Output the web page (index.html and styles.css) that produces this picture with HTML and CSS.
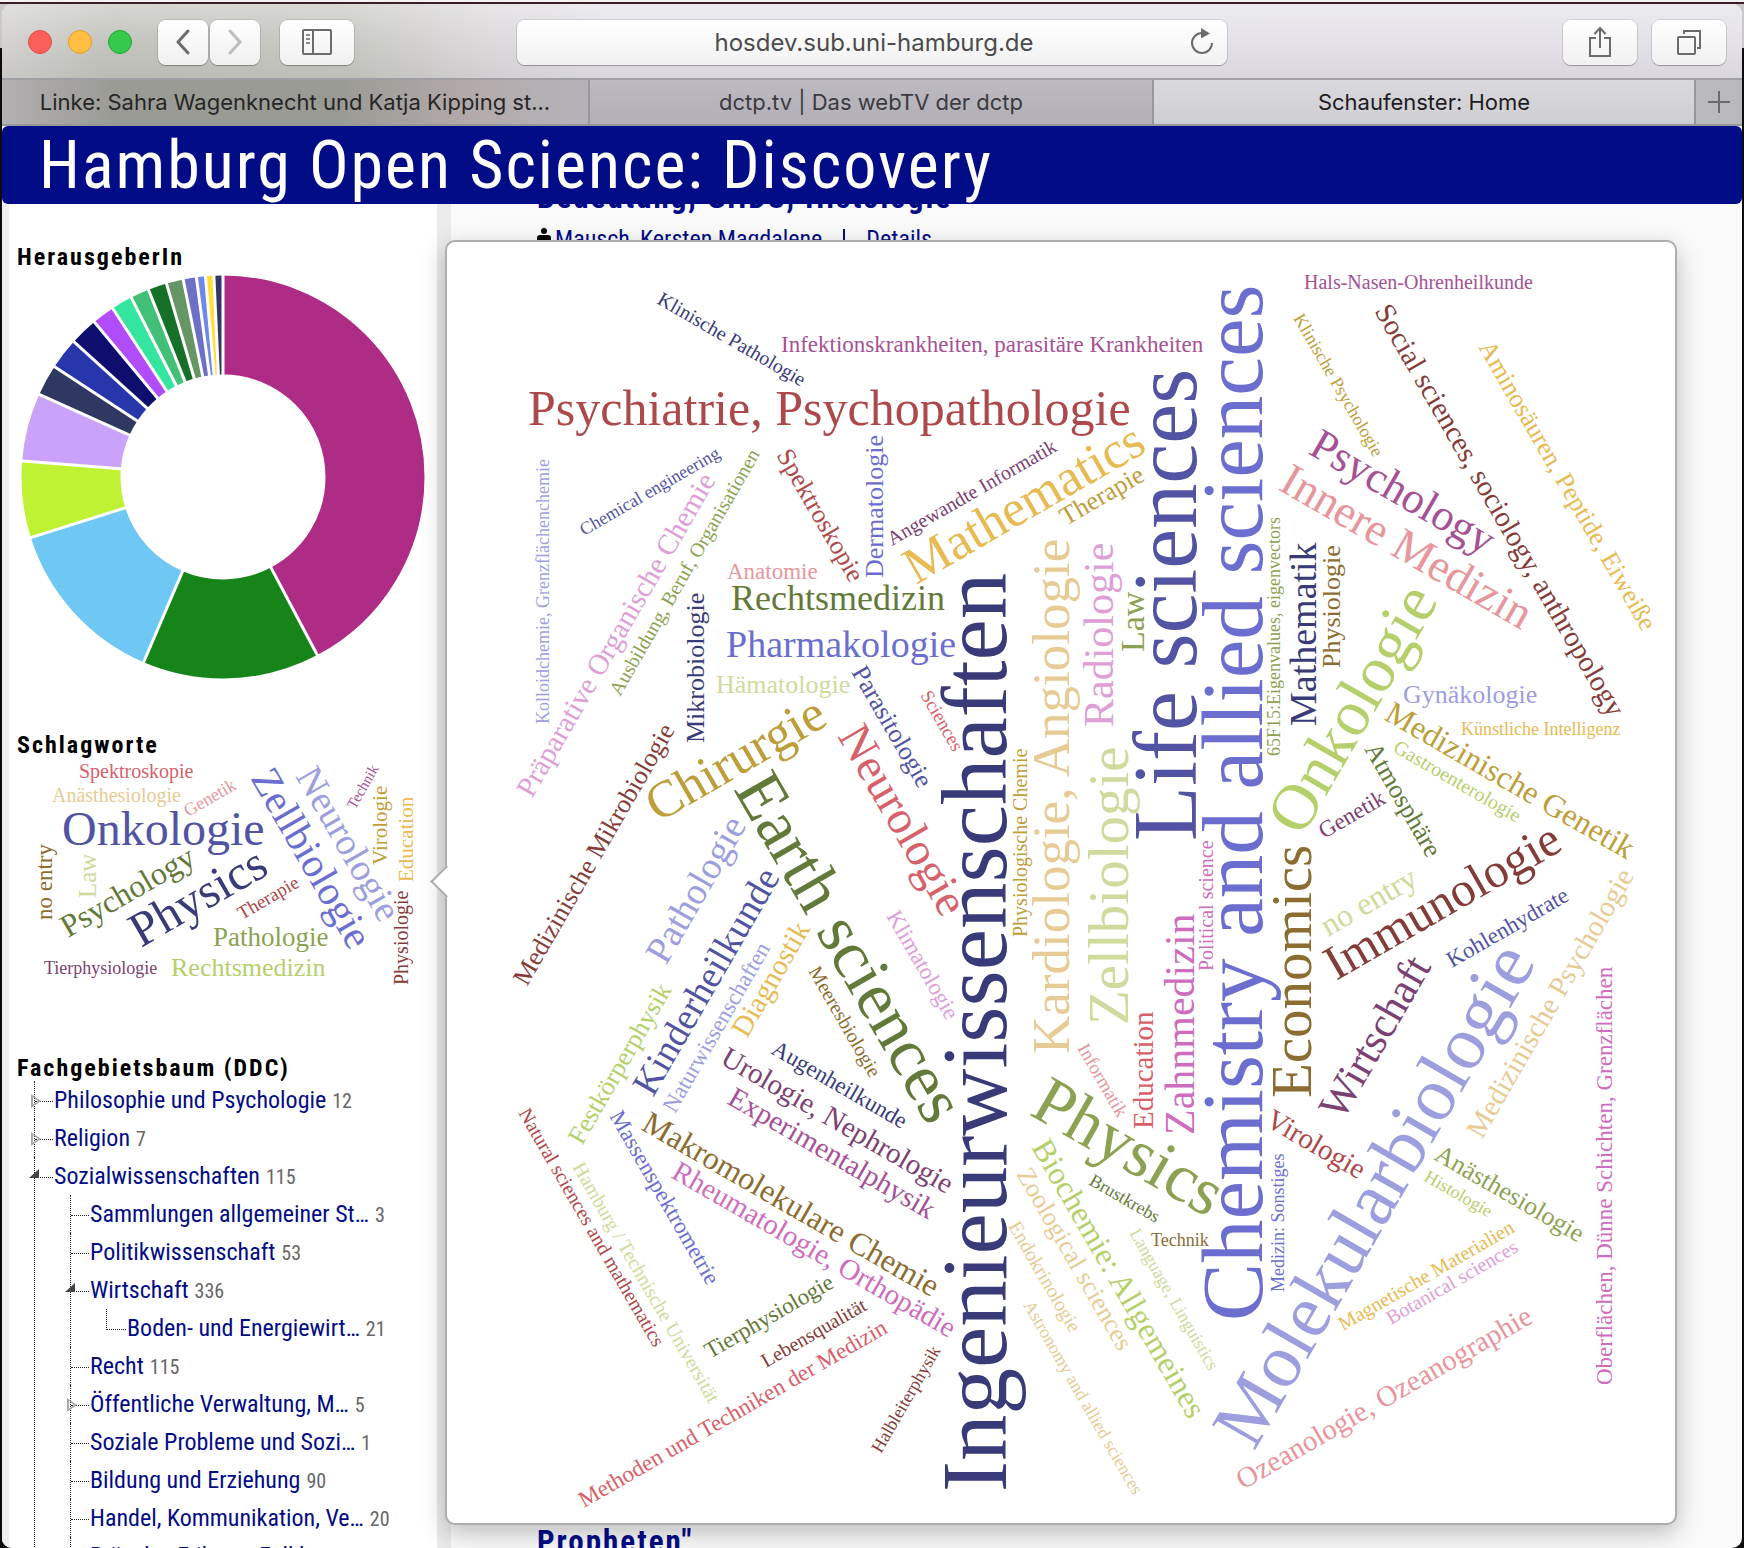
FILE: index.html
```html
<!DOCTYPE html>
<html lang="de">
<head>
<meta charset="utf-8">
<title>Schaufenster: Home</title>
<link rel="stylesheet" href="styles.css">
</head>
<body>
<div class="window">
  <div class="toolbar">
    <div class="toolbar-left">
      <div class="lights">
        <button class="light red" aria-label="Schließen"></button>
        <button class="light yellow" aria-label="Minimieren"></button>
        <button class="light green" aria-label="Vollbild"></button>
      </div>
      <div class="history">
        <button class="tool narrow" aria-label="Zurück">
          <svg width="16" height="26" viewBox="0 0 16 26"><path d="M13 2 3 13l10 11" fill="none" stroke="#6b6b6b" stroke-width="3" stroke-linecap="round" stroke-linejoin="round"/></svg>
        </button>
        <button class="tool narrow" aria-label="Vorwärts">
          <svg width="16" height="26" viewBox="0 0 16 26"><path d="M3 2l10 11L3 24" fill="none" stroke="#bdbdbd" stroke-width="3" stroke-linecap="round" stroke-linejoin="round"/></svg>
        </button>
      </div>
      <button class="tool" aria-label="Seitenleiste">
        <svg width="30" height="26" viewBox="0 0 30 26" fill="none" stroke="#6b6b6b"><rect x="1" y="1" width="28" height="24" rx="1" stroke-width="2"/><path d="M11 1v24" stroke-width="2"/><path d="M4 6h4M4 10h4M4 14h4" stroke-width="2" stroke="#8a8a8a"/></svg>
      </button>
    </div>
    <div class="address">
      <input type="text" value="hosdev.sub.uni-hamburg.de" aria-label="Adresse">
      <button class="reload" aria-label="Neu laden">
        <svg width="24" height="30" viewBox="0 0 24 30"><path d="M12 6a10 10 0 1 0 10 10" fill="none" stroke="#6b6b6b" stroke-width="2"/><path d="M11 1l9 5.500-9 5z" fill="#6b6b6b"/></svg>
      </button>
    </div>
    <div class="toolbar-right">
      <button class="tool" aria-label="Teilen">
        <svg width="24" height="32" viewBox="0 0 24 32" fill="none" stroke="#6b6b6b" stroke-width="2"><path d="M8 12H2v18h20V12h-6"/><path d="M12 22V2M6.500 8 12 2l5.500 6"/></svg>
      </button>
      <button class="tool" aria-label="Alle Tabs">
        <svg width="26" height="26" viewBox="0 0 26 26" fill="none" stroke="#6b6b6b" stroke-width="2"><rect x="2" y="8" width="17" height="17" rx="1"/><path d="M8 5V2h16v17h-3"/></svg>
      </button>
    </div>
  </div>
  <nav class="tabs">
    <a class="tab first" href="#">Linke: Sahra Wagenknecht und Katja Kipping st...</a>
    <a class="tab second" href="#">dctp.tv | Das webTV der dctp</a>
    <a class="tab active" href="#">Schaufenster: Home</a>
    <button class="tab-new" aria-label="Neuer Tab"><svg width="22" height="22" viewBox="0 0 22 22"><path d="M11 0v22M0 11h22" stroke="#6b6a6f" stroke-width="2"/></svg></button>
  </nav>
  <header class="banner"><h1>Hamburg Open Science: Discovery</h1></header>
  <main class="page">
    <aside class="sidebar">
      <section>
        <h2>HerausgeberIn</h2>
        <svg class="donut" viewBox="0 0 412 460">
          <g transform="translate(206 206) rotate(-90)" fill="none" stroke-width="99">
            <circle r="152" pathLength="360" stroke="#af2c86" stroke-dasharray="152.1 360"/>
            <circle r="152" pathLength="360" stroke="#17841a" stroke-dasharray="51.1 360" stroke-dashoffset="-152.1"/>
            <circle r="152" pathLength="360" stroke="#6fc8f4" stroke-dasharray="49.300 360" stroke-dashoffset="-203.2"/>
            <circle r="152" pathLength="360" stroke="#bff232" stroke-dasharray="22.1 360" stroke-dashoffset="-252.5"/>
            <circle r="152" pathLength="360" stroke="#caa2fa" stroke-dasharray="19.6 360" stroke-dashoffset="-274.6"/>
            <circle r="152" pathLength="360" stroke="#2e3860" stroke-dasharray="9 360" stroke-dashoffset="-294.2"/>
            <circle r="152" pathLength="360" stroke="#2736aa" stroke-dasharray="9 360" stroke-dashoffset="-303.2"/>
            <circle r="152" pathLength="360" stroke="#0e0e6e" stroke-dasharray="8.1 360" stroke-dashoffset="-312.2"/>
            <circle r="152" pathLength="360" stroke="#b04cf8" stroke-dasharray="6.5 360" stroke-dashoffset="-320.3"/>
            <circle r="152" pathLength="360" stroke="#33e59e" stroke-dasharray="6.1 360" stroke-dashoffset="-326.8"/>
            <circle r="152" pathLength="360" stroke="#43c077" stroke-dasharray="5.4 360" stroke-dashoffset="-332.9"/>
            <circle r="152" pathLength="360" stroke="#17702a" stroke-dasharray="5.4 360" stroke-dashoffset="-338.3"/>
            <circle r="152" pathLength="360" stroke="#669566" stroke-dasharray="4.900 360" stroke-dashoffset="-343.7"/>
            <circle r="152" pathLength="360" stroke="#6e70c6" stroke-dasharray="3.8 360" stroke-dashoffset="-348.6"/>
            <circle r="152" pathLength="360" stroke="#7089e8" stroke-dasharray="2.6 360" stroke-dashoffset="-352.4"/>
            <circle r="152" pathLength="360" stroke="#ffdf3b" stroke-dasharray="2.4 360" stroke-dashoffset="-355"/>
            <circle r="152" pathLength="360" stroke="#363668" stroke-dasharray="2.6 360" stroke-dashoffset="-357.4"/>
          </g>
          <g transform="translate(206 206)" stroke="#fff" stroke-width="3">
            <path d="M0-100V-204"/>
            <path d="M0-100V-204" transform="rotate(152.1)"/>
            <path d="M0-100V-204" transform="rotate(203.2)"/>
            <path d="M0-100V-204" transform="rotate(252.5)"/>
            <path d="M0-100V-204" transform="rotate(274.6)"/>
            <path d="M0-100V-204" transform="rotate(294.2)"/>
            <path d="M0-100V-204" transform="rotate(303.2)"/>
            <path d="M0-100V-204" transform="rotate(312.2)"/>
            <path d="M0-100V-204" transform="rotate(320.3)"/>
            <path d="M0-100V-204" transform="rotate(326.8)"/>
            <path d="M0-100V-204" transform="rotate(332.9)"/>
            <path d="M0-100V-204" transform="rotate(338.3)"/>
            <path d="M0-100V-204" transform="rotate(343.7)"/>
            <path d="M0-100V-204" transform="rotate(348.6)"/>
            <path d="M0-100V-204" transform="rotate(352.4)"/>
            <path d="M0-100V-204" transform="rotate(355)"/>
            <path d="M0-100V-204" transform="rotate(357.4)"/>
          </g>
        </svg>
      </section>
      <section>
        <h2>Schlagworte</h2>
        <svg class="cloud" viewBox="0 0 412 295">
          <text class="c14" font-size="20" transform="translate(62 19)">Spektroskopie</text>
          <text class="c11" font-size="20" transform="translate(35 43)">Anästhesiologie</text>
          <text class="c15" font-size="18" transform="translate(171 58) rotate(-30)">Genetik</text>
          <text class="c1" font-size="48" transform="translate(45 86)">Onkologie</text>
          <text class="c2" font-size="41" transform="translate(233 19) rotate(60)">Zellbiologie</text>
          <text class="c3" font-size="38" transform="translate(278 17) rotate(60)">Neurologie</text>
          <text class="c17" font-size="15" transform="translate(338 51) rotate(-60)">Technik</text>
          <text class="c9" font-size="21" transform="translate(370 106) rotate(-90)">Virologie</text>
          <text class="c10" font-size="21" transform="translate(396 123) rotate(-90)">Education</text>
          <text class="c12" font-size="20" transform="translate(391 226) rotate(-90)">Physiologie</text>
          <text class="c8" font-size="23" transform="translate(35 161) rotate(-90)">no entry</text>
          <text class="c7" font-size="25" transform="translate(79 139) rotate(-90)">Law</text>
          <text class="c4" font-size="32" transform="translate(51 179) rotate(-30)">Psychology</text>
          <text class="c0" font-size="49" transform="translate(124 189) rotate(-30)">Physics</text>
          <text class="c13" font-size="19" transform="translate(225 161) rotate(-30)">Therapie</text>
          <text class="c5" font-size="27" transform="translate(196 187)">Pathologie</text>
          <text class="c16" font-size="18" transform="translate(27 215)">Tierphysiologie</text>
          <text class="c6" font-size="26" transform="translate(154 217)">Rechtsmedizin</text>
        </svg>
      </section>
      <section>
        <h2>Fachgebietsbaum (DDC)</h2>
        <ul class="tree">
          <li><div class="row"><button class="toggle closed" aria-label="Aufklappen"></button><a href="#">Philosophie und Psychologie</a><span>12</span></div></li>
          <li><div class="row"><button class="toggle closed" aria-label="Aufklappen"></button><a href="#">Religion</a><span>7</span></div></li>
          <li><div class="row"><button class="toggle open" aria-label="Zuklappen"></button><a href="#">Sozialwissenschaften</a><span>115</span></div>
            <ul>
              <li><div class="row"><a href="#">Sammlungen allgemeiner St…</a><span>3</span></div></li>
              <li><div class="row"><a href="#">Politikwissenschaft</a><span>53</span></div></li>
              <li><div class="row"><button class="toggle open" aria-label="Zuklappen"></button><a href="#">Wirtschaft</a><span>336</span></div>
                <ul>
                  <li class="last"><div class="row"><a href="#">Boden- und Energiewirt…</a><span>21</span></div></li>
                </ul>
              </li>
              <li><div class="row"><a href="#">Recht</a><span>115</span></div></li>
              <li><div class="row"><button class="toggle closed" aria-label="Aufklappen"></button><a href="#">Öffentliche Verwaltung, M…</a><span>5</span></div></li>
              <li><div class="row"><a href="#">Soziale Probleme und Sozi…</a><span>1</span></div></li>
              <li><div class="row"><a href="#">Bildung und Erziehung</a><span>90</span></div></li>
              <li><div class="row"><a href="#">Handel, Kommunikation, Ve…</a><span>20</span></div></li>
              <li><div class="row"><a href="#">Bräuche, Etikette, Folklore</a></div></li>
            </ul>
          </li>
        </ul>
      </section>
    </aside>
    <div class="results">
      <article>
        <h3>Bedeutung, GHDS, Histologie</h3>
        <p class="meta">
          <svg width="14" height="26" viewBox="0 0 14 26"><circle cx="7" cy="5" r="3"/><path d="M3 9h8q3 0 3 3v6h-3v8H3v-8H0v-6q0-3 3-3z"/></svg>
          <a href="#">Mausch, Kersten Magdalene</a><i></i><a href="#">Details</a>
        </p>
      </article>
      <article><h3>Propheten"</h3></article>
    </div>
    <div class="popup">
      <svg class="cloud" viewBox="447 242 1228 1281">
        <text class="c0" font-size="20" transform="translate(656 303) rotate(30)">Klinische Pathologie</text>
        <text class="c17" font-size="23" transform="translate(781 352)">Infektionskrankheiten, parasitäre Krankheiten</text>
        <text class="c13" font-size="50" transform="translate(528 425)">Psychiatrie, Psychopathologie</text>
        <text class="c1" font-size="18" transform="translate(584 536) rotate(-30)">Chemical engineering</text>
        <text class="c3" font-size="18" transform="translate(549 724) rotate(-90)">Kolloidchemie, Grenzflächenchemie</text>
        <text class="c19" font-size="29" transform="translate(532 799) rotate(-60)">Präparative Organische Chemie</text>
        <text class="c5" font-size="20" transform="translate(620 697) rotate(-60)">Ausbildung, Beruf, Organisationen</text>
        <text class="c13" font-size="26" transform="translate(776 455) rotate(60)">Spektroskopie</text>
        <text class="c2" font-size="26" transform="translate(883 578) rotate(-90)">Dermatologie</text>
        <text class="c16" font-size="20" transform="translate(892 546) rotate(-30)">Angewandte Informatik</text>
        <text class="c10" font-size="52" transform="translate(916 585) rotate(-30)">Mathematics</text>
        <text class="c9" font-size="26" transform="translate(1066 526) rotate(-30)">Therapie</text>
        <text class="c15" font-size="23" transform="translate(727 579)">Anatomie</text>
        <text class="c4" font-size="36" transform="translate(731 610)">Rechtsmedizin</text>
        <text class="c2" font-size="38" transform="translate(726 657)">Pharmakologie</text>
        <text class="c7" font-size="26" transform="translate(716 693)">Hämatologie</text>
        <text class="c0" font-size="26" transform="translate(704 743) rotate(-90)">Mikrobiologie</text>
        <text class="c1" font-size="26" transform="translate(851 672) rotate(60)">Parasitologie</text>
        <text class="c14" font-size="19" transform="translate(920 695) rotate(60)">Sciences</text>
        <text class="c0" font-size="93" transform="translate(1006 1492) rotate(-90)">Ingenieurwissenschaften</text>
        <text class="c11" font-size="53" transform="translate(1069 1054) rotate(-90)">Kardiologie, Angiologie</text>
        <text class="c19" font-size="42" transform="translate(1113 727) rotate(-90)">Radiologie</text>
        <text class="c5" font-size="34" transform="translate(1144 652) rotate(-90)">Law</text>
        <text class="c1" font-size="90" transform="translate(1196 841) rotate(-90)">Life sciences</text>
        <text class="c2" font-size="87" transform="translate(1262 1321) rotate(-90)">Chemistry and allied sciences</text>
        <text class="c5" font-size="18" transform="translate(1280 756) rotate(-90)">65F15:Eigenvalues, eigenvectors</text>
        <text class="c0" font-size="38" transform="translate(1316 726) rotate(-90)">Mathematik</text>
        <text class="c8" font-size="26" transform="translate(1340 668) rotate(-90)">Physiologie</text>
        <text class="c17" font-size="20" transform="translate(1304 289)">Hals-Nasen-Ohrenheilkunde</text>
        <text class="c9" font-size="18" transform="translate(1293 318) rotate(60)">Klinische Psychologie</text>
        <text class="c12" font-size="29" transform="translate(1374 311) rotate(60)">Social sciences, sociology, anthropology</text>
        <text class="c10" font-size="26" transform="translate(1478 347) rotate(60)">Aminosäuren, Peptide, Eiweiße</text>
        <text class="c17" font-size="44" transform="translate(1307 453) rotate(30)">Psychology</text>
        <text class="c15" font-size="46" transform="translate(1277 489) rotate(30)">Innere Medizin</text>
        <text class="c6" font-size="65" transform="translate(1302 838) rotate(-60)">Onkologie</text>
        <text class="c3" font-size="26" transform="translate(1403 703)">Gynäkologie</text>
        <text class="c10" font-size="18" transform="translate(1461 735)">Künstliche Intelligenz</text>
        <text class="c9" font-size="32" transform="translate(1383 719) rotate(30)">Medizinische Genetik</text>
        <text class="c6" font-size="20" transform="translate(1392 751) rotate(30)">Gastroenterologie</text>
        <text class="c4" font-size="26" transform="translate(1364 749) rotate(60)">Atmosphäre</text>
        <text class="c16" font-size="23" transform="translate(1324 839) rotate(-30)">Genetik</text>
        <text class="c12" font-size="49" transform="translate(1336 981) rotate(-30)">Immunologie</text>
        <text class="c7" font-size="32" transform="translate(1328 937) rotate(-30)">no entry</text>
        <text class="c1" font-size="23" transform="translate(1452 968) rotate(-30)">Kohlenhydrate</text>
        <text class="c8" font-size="57" transform="translate(1311 1098) rotate(-90)">Economics</text>
        <text class="c16" font-size="43" transform="translate(1342 1122) rotate(-60)">Wirtschaft</text>
        <text class="c3" font-size="76" transform="translate(1254 1452) rotate(-60)">Molekularbiologie</text>
        <text class="c11" font-size="29" transform="translate(1482 1140) rotate(-60)">Medizinische Psychologie</text>
        <text class="c18" font-size="23" transform="translate(1612 1385) rotate(-90)">Oberflächen, Dünne Schichten, Grenzflächen</text>
        <text class="c13" font-size="29" transform="translate(1264 1125) rotate(30)">Virologie</text>
        <text class="c18" font-size="42" transform="translate(1194 1135) rotate(-90)">Zahnmedizin</text>
        <text class="c18" font-size="20" transform="translate(1213 971) rotate(-90)">Political science</text>
        <text class="c7" font-size="57" transform="translate(1128 1025) rotate(-90)">Zellbiologie</text>
        <text class="c9" font-size="20" transform="translate(1027 937) rotate(-90)">Physiologische Chemie</text>
        <text class="c15" font-size="19" transform="translate(1077 1048) rotate(60)">Informatik</text>
        <text class="c14" font-size="29" transform="translate(1153 1129) rotate(-90)">Education</text>
        <text class="c5" font-size="68" transform="translate(1028 1114) rotate(30)">Physics</text>
        <text class="c6" font-size="32" transform="translate(1031 1147) rotate(60)">Biochemie: Allgemeines</text>
        <text class="c11" font-size="26" transform="translate(1016 1174) rotate(60)">Zoological sciences</text>
        <text class="c11" font-size="20" transform="translate(1008 1226) rotate(60)">Endokrinologie</text>
        <text class="c11" font-size="18" transform="translate(1023 1305) rotate(60)">Astronomy and allied sciences</text>
        <text class="c4" font-size="18" transform="translate(1088 1184) rotate(30)">Brustkrebs</text>
        <text class="c8" font-size="18" transform="translate(1151 1246)">Technik</text>
        <text class="c7" font-size="18" transform="translate(1129 1233) rotate(60)">Language, Linguistics</text>
        <text class="c2" font-size="18" transform="translate(1284 1292) rotate(-90)">Medizin: Sonstiges</text>
        <text class="c5" font-size="26" transform="translate(1433 1159) rotate(30)">Anästhesiologie</text>
        <text class="c6" font-size="18" transform="translate(1423 1180) rotate(30)">Histologie</text>
        <text class="c10" font-size="20" transform="translate(1343 1331) rotate(-30)">Magnetische Materialien</text>
        <text class="c19" font-size="20" transform="translate(1391 1325) rotate(-30)">Botanical sciences</text>
        <text class="c15" font-size="29" transform="translate(1243 1490) rotate(-30)">Ozeanologie, Ozeanographie</text>
        <text class="c12" font-size="26" transform="translate(527 987) rotate(-60)">Medizinische Mikrobiologie</text>
        <text class="c9" font-size="52" transform="translate(658 823) rotate(-30)">Chirurgie</text>
        <text class="c4" font-size="68" transform="translate(733 789) rotate(60)">Earth sciences</text>
        <text class="c14" font-size="47" transform="translate(837 736) rotate(60)">Neurologie</text>
        <text class="c3" font-size="38" transform="translate(666 966) rotate(-60)">Pathologie</text>
        <text class="c1" font-size="38" transform="translate(653 1098) rotate(-60)">Kinderheilkunde</text>
        <text class="c3" font-size="23" transform="translate(675 1114) rotate(-60)">Naturwissenschaften</text>
        <text class="c10" font-size="29" transform="translate(747 1039) rotate(-60)">Diagnostik</text>
        <text class="c8" font-size="20" transform="translate(808 971) rotate(60)">Meeresbiologie</text>
        <text class="c19" font-size="23" transform="translate(886 916) rotate(60)">Klimatologie</text>
        <text class="c6" font-size="26" transform="translate(582 1146) rotate(-60)">Festkörperphysik</text>
        <text class="c0" font-size="23" transform="translate(770 1053) rotate(30)">Augenheilkunde</text>
        <text class="c16" font-size="29" transform="translate(719 1063) rotate(30)">Urologie, Nephrologie</text>
        <text class="c17" font-size="29" transform="translate(726 1103) rotate(30)">Experimentalphysik</text>
        <text class="c8" font-size="32" transform="translate(640 1129) rotate(30)">Makromolekulare Chemie</text>
        <text class="c18" font-size="29" transform="translate(670 1177) rotate(30)">Rheumatologie, Orthopädie</text>
        <text class="c2" font-size="23" transform="translate(609 1116) rotate(60)">Massenspektrometrie</text>
        <text class="c13" font-size="20" transform="translate(518 1113) rotate(60)">Natural sciences and mathematics</text>
        <text class="c7" font-size="20" transform="translate(572 1167) rotate(60)">Hamburg / Technische Universität</text>
        <text class="c4" font-size="23" transform="translate(710 1359) rotate(-30)">Tierphysiologie</text>
        <text class="c12" font-size="20" transform="translate(766 1368) rotate(-30)">Lebensqualität</text>
        <text class="c14" font-size="23" transform="translate(584 1508) rotate(-30)">Methoden und Techniken der Medizin</text>
        <text class="c12" font-size="18" transform="translate(881 1454) rotate(-60)">Halbleiterphysik</text>
      </svg>
    </div>
  </main>
</div>
</body>
</html>
```
FILE: styles.css
```css
* { box-sizing: border-box; }
body {
  margin: 0;
  padding: 4px 2px 0;
  background: linear-gradient(#f4f2f2 0, #f4f2f2 2px, #3a1f26 2px, #3a1f26 4px, #c9c9c9 4px, #c9c9c9 48px, #0c0c0c 48px);
  font-family: "Roboto Condensed", Roboto, sans-serif;
  font-size: 24px;
}
h1, h2, h3, p, ul { margin: 0; padding: 0; }
ul { list-style: none; }
a { color: #020c87; text-decoration: none; }
button { border: 0; padding: 0; background: none; }
svg { display: block; }

.window {
  display: flex;
  flex-direction: column;
  height: calc(100vh - 4px);
  overflow: hidden;
  border-radius: 10px;
  background: #fafafa;
}

.toolbar {
  display: grid;
  grid-template-columns: 489px minmax(0, 710px) 1fr;
  align-items: center;
  flex: none;
  height: 76px;
  padding: 2px 16px 0 26px;
  border-bottom: 2px solid #a09fa3;
  background:
    linear-gradient(rgba(255,255,255,.3), rgba(255,255,255,0) 50%, rgba(0,0,0,.05)),
    linear-gradient(to right, #d4d3d1, #c4c5bf 110px, #c8c9c3 340px, #dcd9db 480px, #e4e2e8 600px);
}
.toolbar-left, .lights, .history, .toolbar-right { display: flex; align-items: center; }
.lights { gap: 16px; margin-right: 26px; }
.light { width: 24px; height: 24px; border-radius: 50%; border: 1px solid; }
.red { background: #fc605b; border-color: #e04c48; }
.yellow { background: #fdbe41; border-color: #dfa035; }
.green { background: #35ca4b; border-color: #24a437; }
.history { gap: 2px; margin-right: 20px; }
.toolbar-right { justify-content: flex-end; gap: 15px; }
.tool {
  display: flex;
  align-items: center;
  justify-content: center;
  width: 74px;
  height: 45px;
  border-radius: 8px;
  background: linear-gradient(#fff, #f0f0f0);
  box-shadow: 0 0 0 1px rgba(0,0,0,.1), 0 1px 1px rgba(0,0,0,.25);
}
.tool.narrow { width: 50px; }
.address { position: relative; }
.address input {
  display: block;
  width: 100%;
  height: 45px;
  padding: 0 40px 0 44px;
  border: 0;
  border-radius: 8px;
  background: linear-gradient(#fff, #f2f2f2);
  box-shadow: 0 0 0 1px rgba(0,0,0,.1), 0 1px 1px rgba(0,0,0,.25);
  color: #4c4c4c;
  font: 24px Inter, sans-serif;
  text-align: center;
}
.reload { position: absolute; right: 13px; top: 7px; }

.tabs {
  display: grid;
  grid-template-columns: minmax(0, 588fr) minmax(0, 564fr) minmax(0, 542fr) 46px;
  flex: none;
  height: 46px;
  border-bottom: 2px solid #98979b;
}
.tab {
  padding: 0 30px;
  overflow: hidden;
  border-right: 2px solid #98979b;
  color: #3b3a3f;
  font: 22px/44px Inter, sans-serif;
  text-align: center;
  white-space: nowrap;
}
.tab.first {
  background: linear-gradient(to right, #b2b0b1, #9b9b96 110px, #9b9b96 340px, #b3aaaa 470px, #b4b2b7 560px);
  color: #262626;
}
.tab.second { background: linear-gradient(#bcbac0, #b2b0b6); }
.tab.active { background: linear-gradient(#d9d8dc, #cfced3); color: #1d1c20; }
.tab-new { display: flex; align-items: center; justify-content: center; background: #b9b8bb; }

.banner {
  position: relative;
  z-index: 1;
  flex: none;
  padding: 2px 37px 0;
  border-radius: 6px;
  background: #020c87;
  color: #fff;
}
.banner h1 { font-size: 66px; font-weight: 400; line-height: 76px; letter-spacing: 2px; }

.page { position: relative; display: flex; flex: 1; min-height: 0; }
.sidebar {
  flex: none;
  width: 449px;
  padding: 39px 8px 0;
  overflow: hidden;
  border-left: 7px solid #efefef;
  border-right: 14px solid #ebebeb;
  background: #fff;
}
.sidebar h2 { color: #000; font-size: 24px; line-height: 28px; letter-spacing: 2px; }
.sidebar svg { width: 100%; overflow: visible; }

.tree { margin-top: -1px; padding-left: 17px; }
.tree ul { padding-left: 35px; }
.tree li { border-left: 1px dotted #222; }
.tree li.last { border-left-color: transparent; }
.row { position: relative; display: flex; height: 38px; line-height: 38px; white-space: nowrap; }
.row::before { content: ""; width: 18px; height: 20px; margin-right: 1px; border-bottom: 1px dotted #222; }
.last > .row::before { width: 19px; margin-left: -1px; border-left: 1px dotted #222; }
.row span { margin-left: 6px; color: #666; font-size: 20px; line-height: 40px; }
.toggle { position: absolute; left: -6px; width: 10px; }
.toggle.closed { left: -4px; top: 13px; height: 14px; background: #aaa; clip-path: polygon(0 0, 100% 50%, 0 100%, 0 12px, 7px 50%, 2px 3px, 2px 11px, 0 12px); }
.toggle.open { top: 12px; height: 9px; background: #444; clip-path: polygon(100% 0, 100% 100%, 0 100%); }

.results {
  display: flex;
  flex: 1;
  flex-direction: column;
  justify-content: space-between;
  min-width: 0;
  padding-left: 86px;
  margin: -24px 0 -12px;
}
.results h3 { color: #020c87; font-size: 31px; line-height: 36px; letter-spacing: 2px; }
.meta { display: flex; align-items: center; margin-top: 8px; line-height: 30px; }
.meta svg { margin-right: 4px; }
.meta i { width: 2px; height: 20px; margin: 0 21px; background: #020c87; }

.popup {
  position: absolute;
  left: 443px;
  right: 65px;
  top: 36px;
  border: 2px solid #adadad;
  border-radius: 10px;
  background: #fff;
  box-shadow: 0 8px 24px rgba(0,0,0,.25);
}
.popup::before {
  content: "";
  position: absolute;
  left: -12px;
  top: 628px;
  width: 21px;
  height: 21px;
  border: solid #adadad;
  border-width: 0 0 2px 2px;
  background: #fff;
  transform: rotate(45deg);
}
.popup svg { position: relative; width: 100%; height: auto; }

.cloud { font-family: "Liberation Serif", "Times New Roman", serif; }
.c0 { fill: #393b79; }
.c1 { fill: #5254a3; }
.c2 { fill: #6b6ecf; }
.c3 { fill: #9c9ede; }
.c4 { fill: #637939; }
.c5 { fill: #8ca252; }
.c6 { fill: #b5cf6b; }
.c7 { fill: #cedb9c; }
.c8 { fill: #8c6d31; }
.c9 { fill: #bd9e39; }
.c10 { fill: #e7ba52; }
.c11 { fill: #e7cb94; }
.c12 { fill: #843c39; }
.c13 { fill: #ad494a; }
.c14 { fill: #d6616b; }
.c15 { fill: #e7969c; }
.c16 { fill: #7b4173; }
.c17 { fill: #a55194; }
.c18 { fill: #ce6dbd; }
.c19 { fill: #de9ed6; }
```
